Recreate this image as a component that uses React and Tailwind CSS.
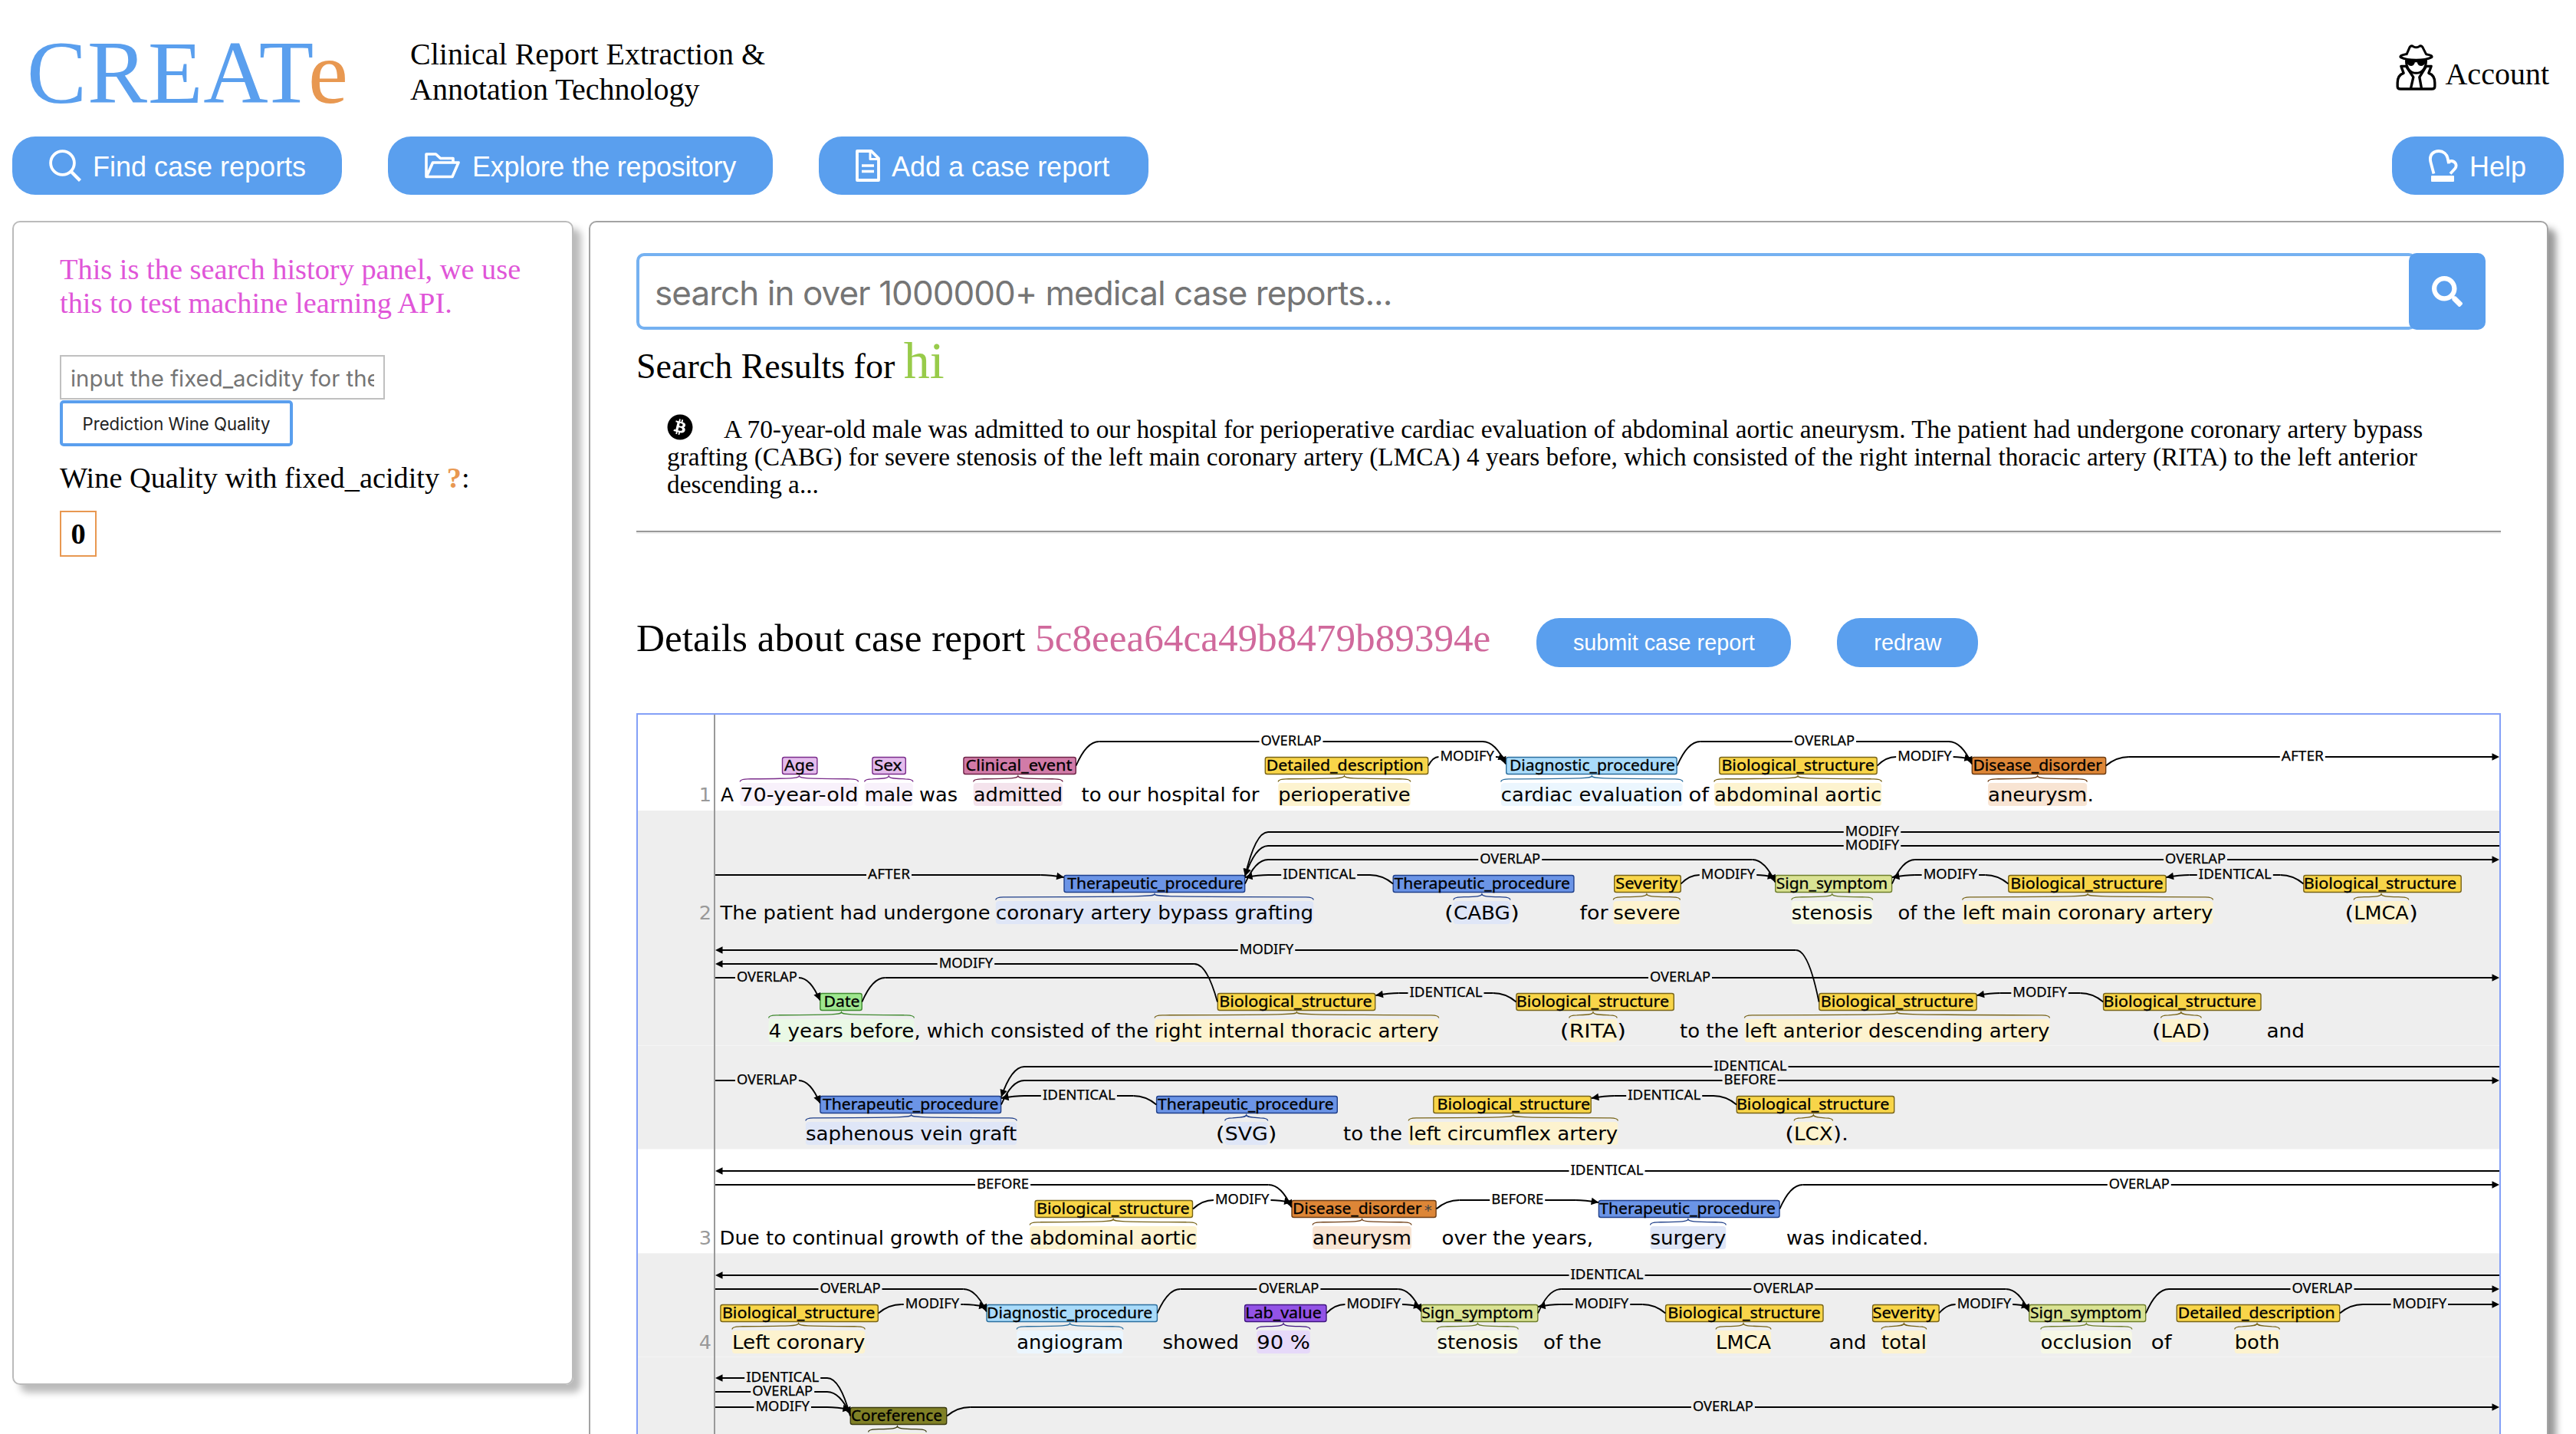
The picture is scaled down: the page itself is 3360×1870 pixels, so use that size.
import React from "react";
import { FaSearch, FaBitcoin } from "react-icons/fa";

const SERIF = "font-['Liberation_Serif',serif]";
const SANS = "font-['Liberation_Sans',sans-serif]";
const INTER = "font-['Inter',sans-serif]";

/* ---------- annotation data ---------- */

// label, box width, text width, fill, border, highlight
const TYPES = {
  age: ["Age", 46, 36.5, "#e4bcec", "#7a2c8b", "#f8f1fb"],
  sex: ["Sex", 44, 34, "#e4bcec", "#7a2c8b", "#f8f1fb"],
  cli: ["Clinical_event", 147, 136.5, "#d17ba8", "#6f2447", "#f4e3ec"],
  det: ["Detailed_description", 213, 202.4, "#f8d549", "#786418", "#fdf3cf"],
  dia: ["Diagnostic_procedure", 223, 213.5, "#a9dbfa", "#2c6f9f", "#ebf6fe"],
  bio: ["Biological_structure", 206, 197, "#f8d549", "#786418", "#fdf3cf"],
  dis: ["Disease_disorder", 175, 166, "#dd8637", "#6f3e14", "#f8e4d3"],
  dis2: ["Disease_disorder", 188.7, 166, "#dd8637", "#6f3e14", "#f8e4d3"],
  the: ["Therapeutic_procedure", 236.3, 227, "#6b94e6", "#1f3f8a", "#dfe6f7"],
  sig: ["Sign_symptom", 152.5, 143, "#d9e293", "#6f7f2c", "#f6f8e6"],
  sev: ["Severity", 87.2, 78.5, "#f8d549", "#786418", "#fdf3cf"],
  dat: ["Date", 55, 44.5, "#9fe78f", "#3f8a2f", "#eaf9e6"],
  lab: ["Lab_value", 107, 97, "#9353e6", "#40167f", "#e6d9f9"],
  cor: ["Coreference", 126, 116.5, "#808026", "#3a3a10", "#f5f4d0"],
};

const LEFT = 933;
const RIGHT = 3260;

// spans: [type, boxX, textX, x1, x2, covered text]
// words: [x1, x2, text]
// arcs: [y, left, leftArrow, right, rightArrow, label, labelCentre]; null end = row edge
const ROWS = [
  {
    T: 987.5, no: "1",
    spans: [
      ["age", 1020.2, 1024.6, 965.3, 1119.5, "70-year-old"],
      ["sex", 1137.6, 1141.4, 1127.7, 1190.8, "male"],
      ["cli", 1256.6, 1261, 1269.7, 1386, "admitted"],
      ["det", 1650, 1653.3, 1667.3, 1839.7, "perioperative"],
      ["dia", 1964.4, 1970.5, 1957.8, 2194.8, "cardiac evaluation"],
      ["bio", 2242.5, 2246.9, 2235.9, 2454.2, "abdominal aortic"],
      ["dis", 2572, 2575, 2593.1, 2722.2, "aneurysm"],
    ],
    words: [[940, 957, "A"], [1199, 1249, "was"], [1410.5, 1642.5, "to our hospital for"], [2202.5, 2229, "of"], [2722.5, 2731, "."]],
    arcs: [
      [967, 1403.6, 0, 1964, 1, "OVERLAP", 1684],
      [987, 1863, 0, 1964, 1, "MODIFY", 1913.7],
      [967, 2187.7, 0, 2572, 1, "OVERLAP", 2379.6],
      [987, 2448.7, 0, 2572, 1, "MODIFY", 2510.4],
      [987, 2746.9, 0, null, 1, "AFTER", 3003.3],
    ],
  },
  {
    T: 1141.5, no: "2",
    spans: [
      ["the", 1387.7, 1393.7, 1298.8, 1713.2, "coronary artery bypass grafting"],
      ["the", 1816.9, 1820, 1895.9, 1969.9, "CABG"],
      ["sev", 2105.4, 2108.7, 2104.3, 2191.5, "severe"],
      ["sig", 2315.4, 2318.2, 2336.8, 2442.7, "stenosis"],
      ["bio", 2619.5, 2623.7, 2559.7, 2886.5, "left main coronary artery"],
      ["bio", 3004.5, 3006.2, 3070.2, 3141.8, "LMCA"],
    ],
    words: [[939.5, 1291.5, "The patient had undergone"], [1884, 1895.9, "("], [1969.9, 1981.8, ")"], [2060.5, 2097.5, "for"], [2475.5, 2551, "of the"], [3058.5, 3070.2, "("], [3142, 3154, ")"]],
    arcs: [
      [1141, null, 0, 1387.7, 1, "AFTER", 1159.5],
      [1141, 1624, 1, 1817, 0, "IDENTICAL", 1720.7],
      [1121, 1624, 0, 2315.4, 1, "OVERLAP", 1969.7],
      [1103, 1624, 1, null, 0, "MODIFY", 2442],
      [1085, 1624, 1, null, 0, "MODIFY", 2442],
      [1141, 2192.6, 0, 2315.4, 1, "MODIFY", 2254],
      [1141, 2467.9, 1, 2619.5, 0, "MODIFY", 2543.9],
      [1121, 2467.9, 0, null, 1, "OVERLAP", 2863.6],
      [1141, 2825.5, 1, 3004.5, 0, "IDENTICAL", 2915.3],
    ],
  },
  {
    T: 1295.5,
    spans: [
      ["dat", 1069.5, 1076, 1002.6, 1192.4, "4 years before"],
      ["bio", 1588, 1591.7, 1506.1, 1876.7, "right internal thoracic artery"],
      ["bio", 1977.6, 1979.2, 2046.7, 2109.2, "RITA"],
      ["bio", 2372.5, 2376.3, 2275.4, 2673.5, "left anterior descending artery"],
      ["bio", 2743.3, 2745, 2818.5, 2871.3, "LAD"],
    ],
    words: [[1192.5, 1498, ", which consisted of the"], [2034.8, 2046.7, "("], [2109.2, 2121, ")"], [2191, 2268, "to the"], [2807, 2818.5, "("], [2871.3, 2883, ")"], [2956.5, 3006, "and"]],
    arcs: [
      [1239, null, 1, 2372.5, 0, "MODIFY", 1652],
      [1257, null, 1, 1587.9, 0, "MODIFY", 1259.9],
      [1275, null, 0, 1069.5, 1, "OVERLAP", 1000.4],
      [1275, 1124.4, 0, null, 1, "OVERLAP", 2191.5],
      [1295, 1794.4, 1, 1977.6, 0, "IDENTICAL", 1886],
      [1295, 2578.5, 1, 2743.3, 0, "MODIFY", 2660.6],
    ],
  },
  {
    T: 1429.5,
    spans: [
      ["the", 1069.6, 1074.5, 1050.9, 1326.2, "saphenous vein graft"],
      ["the", 1508.3, 1511.6, 1597.7, 1653.7, "SVG"],
      ["bio", 1869.5, 1876.1, 1837.2, 2110.3, "left circumflex artery"],
      ["bio", 2265, 2266.4, 2340.1, 2390.6, "LCX"],
    ],
    words: [[1585.8, 1597.7, "("], [1653.7, 1665.5, ")"], [1752, 1829, "to the"], [2328.2, 2340.1, "("], [2391, 2411, ")."]],
    arcs: [
      [1391, 1306, 1, null, 0, "IDENTICAL", 2283],
      [1409, 1306, 0, null, 1, "BEFORE", 2282.5],
      [1409, null, 0, 1069.5, 1, "OVERLAP", 1000.4],
      [1429, 1306, 1, 1508.3, 0, "IDENTICAL", 1407.4],
      [1429, 2075.8, 1, 2265, 0, "IDENTICAL", 2170.7],
    ],
  },
  {
    T: 1565.5, no: "3",
    spans: [
      ["bio", 1349.8, 1353.6, 1343.2, 1561, "abdominal aortic"],
      ["dis2", 1684.7, 1687.5, 1712.1, 1841, "aneurysm"],
      ["the", 2085.1, 2087.8, 2152.5, 2251.3, "surgery"],
    ],
    words: [[938.5, 1335, "Due to continual growth of the"], [1880.5, 2078, "over the years,"], [2330, 2515.5, "was indicated."]],
    arcs: [
      [1527, null, 1, null, 0, "IDENTICAL", 2096],
      [1545, null, 0, 1684.7, 1, "BEFORE", 1308.1],
      [1565, 1556, 0, 1684.7, 1, "MODIFY", 1620.2],
      [1565, 1873.4, 0, 2085.1, 1, "BEFORE", 1979.2],
      [1545, 2321.4, 0, null, 1, "OVERLAP", 2790.3],
    ],
  },
  {
    T: 1701.5, no: "4",
    spans: [
      ["bio", 939.6, 943.4, 954.9, 1128.2, "Left coronary"],
      ["dia", 1286.7, 1288.6, 1326.2, 1465, "angiogram"],
      ["lab", 1623.3, 1625.8, 1639.2, 1708.9, "90 %"],
      ["sig", 1853.6, 1855.8, 1874.5, 1980.3, "stenosis"],
      ["bio", 2172.3, 2176.7, 2238.1, 2310, "LMCA"],
      ["sev", 2442.3, 2444.1, 2454.1, 2512.8, "total"],
      ["sig", 2646.5, 2649.5, 2661.8, 2780.9, "occlusion"],
      ["det", 2839, 2842.2, 2914.7, 2973.4, "both"],
    ],
    words: [[1516.5, 1616, "showed"], [2013, 2089, "of the"], [2385.8, 2434.5, "and"], [2805.7, 2832.5, "of"]],
    arcs: [
      [1663, null, 1, null, 0, "IDENTICAL", 2096],
      [1681, null, 0, 1286.7, 1, "OVERLAP", 1109],
      [1701, 1145.8, 0, 1286.7, 1, "MODIFY", 1216],
      [1681, 1509.5, 0, 1853.6, 1, "OVERLAP", 1680.9],
      [1701, 1730.3, 0, 1853.6, 1, "MODIFY", 1791.7],
      [1681, 2006.1, 0, 2646.5, 1, "OVERLAP", 2325.9],
      [1701, 2006.1, 1, 2172.3, 0, "MODIFY", 2089],
      [1701, 2529.2, 0, 2646.5, 1, "MODIFY", 2587.9],
      [1681, 2799, 0, null, 1, "OVERLAP", 3029],
      [1701, 3052, 0, null, 1, "MODIFY", 3155.8],
    ],
  },
  {
    T: 1835.5,
    spans: [["cor", 1109, 1111.4, 1132.6, 1208.3, ""]],
    words: [],
    arcs: [
      [1797, null, 1, 1109, 0, "IDENTICAL", 1020.7],
      [1815, null, 0, 1109, 1, "OVERLAP", 1020.7],
      [1835, null, 0, 1109, 1, "MODIFY", 1020.7],
      [1835, 1235.2, 0, null, 1, "OVERLAP", 2247.4],
    ],
  },
];

const LABEL_W = { OVERLAP: 78, MODIFY: 69.5, IDENTICAL: 94, AFTER: 54, BEFORE: 67 };

function Head({ x, y, angle }) {
  return <path d="M0 0L-9.5 -4.8L-9.5 4.8Z" transform={`translate(${x} ${y}) rotate(${angle})`} fill="#000" stroke="none" />;
}

// One half of an arc: from the label's edge (lx) to an end point on side dir (-1 left, 1 right)
function Half({ T, y, lx, end, arrow, dir }) {
  if (end === null) {
    const ex = dir < 0 ? LEFT : RIGHT;
    return (
      <>
        <path d={`M${lx} ${y}H${arrow ? ex - dir * 4 : ex}`} />
        {arrow ? <Head x={ex} y={y} angle={dir < 0 ? 180 : 0} /> : null}
      </>
    );
  }
  const high = T - y;
  const dist = Math.abs(end - lx);
  const dx = Math.min(30, dist);
  const fx = end - dir * dx;
  let ty = T + 11;
  if (arrow) ty = high < 5 ? T + 2.5 : high > 30 || (dir < 0 && high > 18) ? T + 1 : T + 9;
  const k = arrow && high < 5 ? 0.4 : 0.55;
  const cx = end - dir * dx * (1 - k);
  const angle = (Math.atan2(ty - y, end - cx) * 180) / Math.PI;
  return (
    <>
      <path d={`M${lx} ${y}H${fx}`} />
      <path d={`M${fx} ${y}Q${cx} ${y} ${end} ${ty}`} strokeWidth="1.8" />
      {arrow ? <Head x={end} y={ty} angle={angle} /> : null}
    </>
  );
}

function Arc({ T, a }) {
  const [y, l, la, r, ra, label, c] = a;
  const w = LABEL_W[label];
  const half = w / 2 + 2.5;
  return (
    <g fill="none" stroke="#000" strokeWidth="2">
      <Half T={T} y={y} lx={c - half} end={l} arrow={la} dir={-1} />
      <Half T={T} y={y} lx={c + half} end={r} arrow={ra} dir={1} />
      <text x={c - w / 2 - 0.5} y={y + 5} textLength={w + 1} lengthAdjust="spacingAndGlyphs" fill="#000" strokeWidth="0.25" className="font-['Noto_Sans',sans-serif] text-[17.5px]">
        {label}
      </text>
    </g>
  );
}

function Span({ T, s }) {
  const [type, bx, tx, x1, x2, text] = s;
  const [label, bw, tw, fill, border, hl] = TYPES[type];
  const m = (x1 + x2) / 2;
  const top = T + 24.5;
  return (
    <g>
      <rect x={x1} y={T + 33.5} width={x2 - x1} height="30" rx="4" fill={hl} />
      <path
        d={`M${x1} ${top + 7.5}Q${x1} ${top + 4} ${x1 + 10} ${top + 3.8}C${m - 8} ${top + 3.2} ${m - 1} ${top + 3.2} ${m} ${top}C${m + 1} ${top + 3.2} ${m + 8} ${top + 3.2} ${x2 - 10} ${top + 3.8}Q${x2} ${top + 4} ${x2} ${top + 7.5}`}
        fill="none" stroke={border} strokeWidth="1.3"
      />
      <rect x={bx + 0.3} y={T} width={bw - 0.6} height="22" rx="2.5" fill={fill} stroke={border} strokeWidth="1.4" />
      <text x={tx - 1.5} y={T + 17.5} textLength={tw + 2.5} lengthAdjust="spacingAndGlyphs" stroke="#000" strokeWidth="0.3" className="font-['Noto_Sans',sans-serif] text-[19.5px]">
        {label}
      </text>
      {type === "dis2" ? <text x={bx + 173} y={T + 19} fill="#444" className="font-['DejaVu_Sans',sans-serif] text-[20px]">*</text> : null}
      {text ? (
        <text x={x1} y={T + 57.5} textLength={x2 - x1} lengthAdjust="spacingAndGlyphs" className="font-['DejaVu_Sans',sans-serif] text-[25.5px]">
          {text}
        </text>
      ) : null}
    </g>
  );
}

function Diagram() {
  return (
    <svg viewBox="832 932 2428 938" className="block h-[938px] w-[2428px]">
      <rect x="832" y="1057" width="2428" height="441.5" fill="#eee" />
      <rect x="832" y="1634.3" width="2428" height="240" fill="#eee" />
      <rect x="832" y="1363" width="2428" height="1" fill="#f4f4f4" />
      <rect x="832" y="1769" width="2428" height="1" fill="#f4f4f4" />
      <rect x="931" y="932" width="2" height="938" fill="#999" />
      {ROWS.map((r) => (
        <g key={r.T}>
          {r.no ? (
            <text x="928" y={r.T + 57.5} textAnchor="end" fill="#999" className="font-['DejaVu_Sans',sans-serif] text-[25.5px]">{r.no}</text>
          ) : null}
          {r.spans.map((s) => <Span key={s[1]} T={r.T} s={s} />)}
          {r.words.map((w) => (
            <text key={w[0]} x={w[0]} y={r.T + 57.5} textLength={w[1] - w[0]} lengthAdjust="spacingAndGlyphs" className="font-['DejaVu_Sans',sans-serif] text-[25.5px]">
              {w[2]}
            </text>
          ))}
          {r.arcs.map((a, i) => <Arc key={i} T={r.T} a={a} />)}
        </g>
      ))}
    </svg>
  );
}

/* ---------- icons ---------- */

function SpyIcon() {
  return (
    <svg viewBox="0 0 158 180" className="h-[60px] w-[53px]" fill="none" stroke="#000" strokeWidth="10" strokeLinejoin="round" strokeLinecap="round">
      <path d="M38 38C20 41 15 46 18 50C34 58 56 61 79 61C102 61 124 58 140 50C143 46 138 41 118 38L104 10Q98 2 90 8Q79 15 68 8Q60 2 54 10L42 38" strokeWidth="9" />
      <path d="M36 60H122C117 66 114 84 98 84C88 84 84 76 83 70H74C73 76 69 84 60 84C44 84 41 66 36 60Z" fill="#000" stroke="none" />
      <path d="M40 64C40 92 56 112 79 112C102 112 118 92 118 64" strokeWidth="9" />
      <path d="M38 85H20L30 112C12 118 6 134 6 150V164Q6 174 18 174H140Q152 174 152 164V150C152 134 146 118 128 112L138 85H120" />
      <path d="M40 86L68 128L58 172M118 86L92 128L100 172" />
    </svg>
  );
}

function SearchIcon() {
  return (
    <svg viewBox="0 0 42 42" className="h-[42px] w-[42px]" fill="none" stroke="#fff" strokeWidth="3.8">
      <circle cx="17.5" cy="17.5" r="15.4" />
      <path d="M28.5 28.5L40.5 40.5" strokeWidth="4.4" />
    </svg>
  );
}

function FolderIcon() {
  return (
    <svg viewBox="0 0 46 34" className="h-[34px] w-[46px]" fill="none" stroke="#fff" strokeWidth="3.6" strokeLinejoin="round">
      <path d="M37 13V7.5H20.5L14.5 2H2V31.5H36L44 13H10.5L2.5 31" />
    </svg>
  );
}

function FileIcon() {
  return (
    <svg viewBox="0 0 32 42" className="h-[42px] w-[32px]" fill="none" stroke="#fff" strokeWidth="3.8" strokeLinejoin="round">
      <path d="M2 2H20.5L30 11.5V40H2Z" />
      <path d="M19 2V12.5H30" strokeWidth="3" />
      <path d="M8 21H24M8 28.5H24" strokeWidth="3.4" />
    </svg>
  );
}

function MittenIcon() {
  return (
    <svg viewBox="0 0 38 42" className="h-[42px] w-[38px]" fill="none" stroke="#fff" strokeWidth="3.8">
      <path d="M6.5 31.5L2.6 17C-0.5 5 8 2 13 2C19 2 23.5 6 24.5 11L26 18C27 13 33 15 34.8 18C36.5 21 36 22.5 34 25L28 31.5" />
      <rect x="3" y="34" width="30" height="8" rx="1" fill="#fff" stroke="none" />
    </svg>
  );
}

function NavButton({ icon, children, className }) {
  return (
    <button className={`${SANS} flex h-[76px] items-center whitespace-nowrap rounded-[30px] bg-[#5a9fee] text-[36px] leading-[36px] text-white ${className}`}>
      {icon}
      <span className="pt-[4px]">{children}</span>
    </button>
  );
}

export default function App() {
  return (
    <div className={`${SERIF} flex h-[1870px] w-[3360px] flex-col overflow-hidden bg-white text-black`}>
      <header className="flex h-[178px] shrink-0 items-start pl-[35px] pr-[35px]">
        <div className="mt-[36px] w-[500px] text-[117px] leading-[117px] tracking-[0.9px] text-[#5a9fee]">
          CREAT<span className="text-[#e89851]">e</span>
        </div>
        <div className="mt-[48px] whitespace-nowrap text-[40px] leading-[46px]">
          Clinical Report Extraction &amp;
          <br />
          Annotation Technology
        </div>
        <div className="ml-auto flex items-start">
          <div className="mt-[58px]">
            <SpyIcon />
          </div>
          <span className="ml-[11px] mt-[74px] text-[40px] leading-[46px]">Account</span>
        </div>
      </header>

      <nav className="flex shrink-0 gap-[60px] px-4">
        <NavButton className="w-[430px] gap-[15px] pl-[48px]" icon={<SearchIcon />}>Find case reports</NavButton>
        <NavButton className="w-[502px] gap-[16px] pl-[48px] tracking-[-0.28px]" icon={<FolderIcon />}>Explore the repository</NavButton>
        <NavButton className="w-[430px] gap-[15px] pl-[48px]" icon={<FileIcon />}>Add a case report</NavButton>
        <NavButton className="ml-auto w-[224px] gap-[15px] pl-[48px]" icon={<MittenIcon />}>Help</NavButton>
      </nav>

      <main className="mt-[34px] flex shrink-0 items-start gap-[20px] pl-4">
        <aside className="h-[1518px] w-[732px] shrink-0 rounded-[10px] border-2 border-[#bbb] px-[60px] pt-[39px] shadow-[10px_10px_10px_#bbb]">
          <p className="whitespace-nowrap text-[38.4px] leading-[44px] text-[#e055d8]">
            This is the search history panel, we use
            <br />
            this to test machine learning API.
          </p>
          <input
            placeholder="input the fixed_acidity for the wine"
            className={`${INTER} mt-[46px] block h-[58px] w-[424px] border-2 border-[#c0c0c0] px-[12px] pt-[2px] text-[29.4px] placeholder:text-[#757575]`}
          />
          <button className={`${INTER} mt-px flex h-[60px] w-[304px] items-center justify-center whitespace-nowrap rounded-[5px] border-4 border-[#5a9fee] pt-px text-[22.2px] text-[#222]`}>
            Prediction Wine Quality
          </button>
          <p className="mt-[19px] whitespace-nowrap text-[38.3px] leading-[44px]">
            Wine Quality with fixed_acidity <b className="text-[#e89851]">?</b>:
          </p>
          <div className="mt-[21px] flex h-[60px] w-[48px] items-center justify-center border-[2px] border-[#e89851] text-[38.4px] font-bold leading-[44px]">0</div>
        </aside>

        <section className="h-[1700px] w-[2556px] shrink-0 rounded-[10px] border-2 border-[#a3a3a3] px-[60px] pt-[40px] shadow-[10px_10px_10px_#999]">
          <div className="flex h-[100px]">
            <div className={`${INTER} flex w-[2322px] items-center whitespace-nowrap rounded-[10px] border-4 border-[#75b1f1] pl-[20px] pt-[3px] text-[44px] leading-[50px] tracking-[-0.95px] text-[#757575]`}>
              search in over 1000000+ medical case reports...
            </div>
            <button className="-ml-[10px] flex w-[100px] items-center justify-center rounded-[10px] bg-[#5a9fee]">
              <FaSearch className="h-[40px] w-[40px] text-white" />
            </button>
          </div>
          <div className="mt-[6px] h-[80px] whitespace-nowrap text-[46px] leading-[46px]">
            Search Results for <span className="text-[68px] leading-[68px] text-[#98cb4a]">hi</span>
          </div>
          <div className="mt-[26px] whitespace-nowrap pl-[40px] text-[33.3px] leading-[36px]">
            <div className="flex h-[36px]">
              <FaBitcoin className="-mt-[2px] mr-[40px] h-[34px] w-[34px]" />
              <span>
                A 70-year-old male was admitted to our hospital for perioperative cardiac evaluation of abdominal aortic aneurysm. The patient had undergone coronary artery bypass
              </span>
            </div>
            grafting (CABG) for severe stenosis of the left main coronary artery (LMCA) 4 years before, which consisted of the right internal thoracic artery (RITA) to the left anterior
            <br />
            descending a...
          </div>
          <hr className="mt-[42px] h-[4px] border-0 border-t-2 border-[#999] bg-[#eee]" />
          <div className="mt-[110px] flex h-[64px] items-center gap-[60px] whitespace-nowrap">
            <h2 className="pb-[13px] text-[51.2px] leading-[64px]">
              Details about case report <span className="text-[#d0699c]">5c8eea64ca49b8479b89394e</span>
            </h2>
            <button className={`${SANS} h-[64px] w-[332px] rounded-[30px] bg-[#5a9fee] pt-[2px] text-[28.8px] text-white`}>submit case report</button>
            <button className={`${SANS} h-[64px] w-[184px] rounded-[30px] bg-[#5a9fee] pt-[2px] text-[28.8px] text-white`}>redraw</button>
          </div>
          <div className="mt-[60px] w-[2432px] border-2 border-[#84a0f7]">
            <Diagram />
          </div>
        </section>
      </main>
    </div>
  );
}
